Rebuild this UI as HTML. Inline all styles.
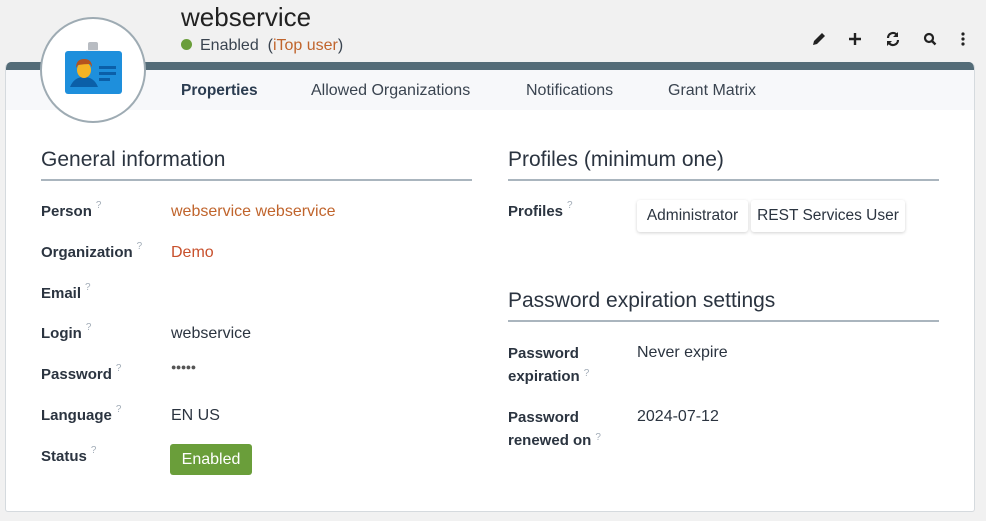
<!DOCTYPE html>
<html><head><meta charset="utf-8"><style>
*{margin:0;padding:0;box-sizing:border-box}
body{width:986px;height:521px;background:#f1f1f1;font-family:"Liberation Sans",sans-serif;color:#2b3440;position:relative;overflow:hidden;font-size:16px}
.abs{position:absolute;white-space:nowrap}
.panel{position:absolute;left:5px;top:62px;width:970px;height:450px;background:#fff;border:1px solid #d5dade;border-top:none;border-radius:6px 6px 3px 3px;overflow:hidden}
.band{position:absolute;left:0;top:0;right:0;height:8px;background:#546c78}
.tabs{position:absolute;left:0;top:8px;right:0;height:40px;background:#f7f8fa}
.circle{position:absolute;left:40px;top:17px;width:106px;height:106px;border-radius:50%;background:#fff;border:2px solid #9eabb3}
.h{font-size:21px;color:#2b3440}
.line{position:absolute;height:2px;background:#aab5be}
.lbl{font-weight:bold;color:#2b3440;font-size:15px}
.q{color:#a3adb8;font-size:10px;vertical-align:top;margin-left:4px;position:relative;top:-3px;font-weight:normal}
.link{color:#c0642c}
.badge{position:absolute;top:200px;height:32px;background:#fff;border-radius:3px;box-shadow:0 1px 3px rgba(0,0,0,.18);line-height:32px;text-align:center;white-space:nowrap;font-size:15.5px}
</style></head><body>
<div class="abs" style="left:181px;top:2px;font-size:26px;color:#222">webservice</div>
<div class="abs" style="left:181px;top:37px;font-size:16px;color:#3a4450"><span style="display:inline-block;width:11px;height:11px;border-radius:50%;background:#6a9e3a;margin-right:8px"></span>Enabled &nbsp;(<span class="link">iTop user</span>)</div>
<svg class="abs" style="left:810px;top:30px" width="160" height="18" viewBox="0 0 160 18">
<path d="M3 15 L4 11 L12 3 L15 6 L7 14 Z" fill="#222"/>
<path d="M45 3v12M39 9h12" stroke="#222" stroke-width="2.4"/>
<path d="M78 8a5 5 0 0 1 9-3M88 10a5 5 0 0 1-9 3" stroke="#222" stroke-width="2.2" fill="none"/><path d="M88 2v5h-5z M77 16v-5h5z" fill="#222"/>
<circle cx="119" cy="8" r="4" stroke="#222" stroke-width="2.2" fill="none"/><path d="M122 11l3.5 3.5" stroke="#222" stroke-width="2.4"/>
<circle cx="153" cy="4" r="1.6" fill="#222"/><circle cx="153" cy="9" r="1.6" fill="#222"/><circle cx="153" cy="14" r="1.6" fill="#222"/>
</svg>
<div class="panel"><div class="band"></div><div class="tabs"></div></div>
<div class="circle"></div>
<svg class="abs" style="left:64px;top:42px" width="60" height="52" viewBox="0 0 60 52">
<rect x="24" y="0" width="10" height="9" rx="2" fill="#b8bcc2"/><rect x="22" y="8" width="14" height="3" fill="#e8eaec"/>
<rect x="1" y="9" width="57" height="43" rx="3" fill="#1e8fdc"/>
<path d="M6 45 q4 -10 14 -10 q10 0 14 10 z" fill="#0b5fa8"/>
<ellipse cx="20" cy="28" rx="7" ry="8" fill="#f5b324"/><path d="M12 26 q0 -9 8 -9 q8 0 8 8 l-2 -3 q-6 0 -12 1z" fill="#b4521e"/>
<rect x="35" y="24" width="17" height="3" fill="#0b5fa8"/><rect x="35" y="30" width="17" height="3" fill="#0b5fa8"/><rect x="35" y="36" width="11" height="3" fill="#0b5fa8"/>
</svg>
<div class="abs" style="left:181px;top:82px;font-weight:bold;color:#2b3c50;font-size:15.5px">Properties</div>
<div class="abs" style="left:311px;top:82px;color:#3a4450;font-size:16px">Allowed Organizations</div>
<div class="abs" style="left:526px;top:82px;color:#3a4450;font-size:16px">Notifications</div>
<div class="abs" style="left:668px;top:82px;color:#3a4450;font-size:16px">Grant Matrix</div>

<div class="abs h" style="left:41px;top:148px">General information</div>
<div class="line" style="left:41px;top:179px;width:431px"></div>
<div class="abs h" style="left:508px;top:148px">Profiles (minimum one)</div>
<div class="line" style="left:508px;top:179px;width:431px"></div>

<div class="abs lbl" style="left:41px;top:203px">Person<span class="q">?</span></div>
<div class="abs link" style="left:171px;top:203px">webservice webservice</div>
<div class="abs lbl" style="left:41px;top:244px">Organization<span class="q">?</span></div>
<div class="abs link" style="left:171px;top:244px;color:#c8502c">Demo</div>
<div class="abs lbl" style="left:41px;top:285px">Email<span class="q">?</span></div>
<div class="abs lbl" style="left:41px;top:325px">Login<span class="q">?</span></div>
<div class="abs" style="left:171px;top:325px">webservice</div>
<div class="abs lbl" style="left:41px;top:366px">Password<span class="q">?</span></div>
<div class="abs" style="left:171px;top:362px;font-size:9px;letter-spacing:-0.5px;color:#555">●●●●●</div>
<div class="abs lbl" style="left:41px;top:407px">Language<span class="q">?</span></div>
<div class="abs" style="left:171px;top:407px">EN US</div>
<div class="abs lbl" style="left:41px;top:448px">Status<span class="q">?</span></div>
<div class="abs" style="left:170px;top:444px;width:82px;height:31px;background:#6a9e3a;color:#fff;border-radius:3px;text-align:center;line-height:31px">Enabled</div>

<div class="abs lbl" style="left:508px;top:203px">Profiles<span class="q">?</span></div>
<div class="badge" style="left:637px;width:111px">Administrator</div>
<div class="badge" style="left:751px;width:154px">REST Services User</div>

<div class="abs h" style="left:508px;top:289px">Password expiration settings</div>
<div class="line" style="left:508px;top:320px;width:431px"></div>
<div class="abs lbl" style="left:508px;top:342px;line-height:23px">Password<br>expiration<span class="q">?</span></div>
<div class="abs" style="left:637px;top:344px">Never expire</div>
<div class="abs lbl" style="left:508px;top:406px;line-height:23px">Password<br>renewed on<span class="q">?</span></div>
<div class="abs" style="left:637px;top:408px">2024-07-12</div>
</body></html>
